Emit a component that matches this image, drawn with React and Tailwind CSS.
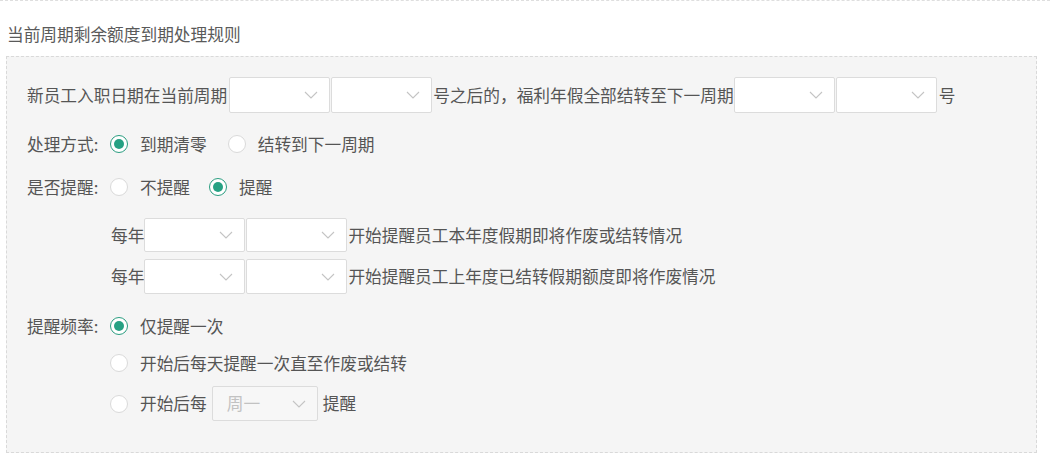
const FONT = { fontFamily: '"Noto Sans CJK SC", "Noto Sans", sans-serif' };

function Chevron({ className = '' }) {
  return (
    <svg width="14" height="8" viewBox="0 0 14 8" className={className} aria-hidden="true">
      <path d="M1 1 L7 7 L13 1" fill="none" stroke="#c4c4c4" strokeWidth="1.1" />
    </svg>
  );
}

function Select({ h = 'h-[36px]', disabled, placeholder }) {
  return (
    <div
      className={`relative ${disabled ? 'w-[106px] bg-[#f7f7f7]' : 'w-[101px] bg-white'} ${h} shrink-0 border border-[#dcdcdc] rounded-[2px] flex items-center`}
    >
      {placeholder && <span className="pl-[14px] text-[#c2c2c2]">{placeholder}</span>}
      <Chevron className="absolute right-[11px] top-1/2 -translate-y-1/2" />
    </div>
  );
}

function Radio({ checked, label }) {
  return (
    <div className="flex items-center">
      <span
        className={`w-[18px] h-[18px] rounded-full border flex items-center justify-center bg-white ${
          checked ? 'border-[#2a9d80]' : 'border-[#dadada]'
        }`}
      >
        {checked && <span className="w-[10px] h-[10px] rounded-full bg-[#26a183]" />}
      </span>
      <span className="ml-[12px]">{label}</span>
    </div>
  );
}

export default function App() {
  return (
    <div className="w-[1050px] h-[465px] bg-white text-[16.7px] text-[#555] leading-none" style={FONT}>
      <div className="border-t border-dashed border-[#dedede] pt-[22px] pl-[7px]">
        <div className="h-[22px] leading-[22px] text-[#5a5a5a]">当前周期剩余额度到期处理规则</div>
      </div>
      <div className="mt-[11px] ml-[6px] w-[1031px] h-[397px] border border-dashed border-[#d9d9d9] bg-[#f5f5f5] pl-[20px]">
        <div className="mt-[20px] h-[36px] flex items-center">
          <span>新员工入职日期在当前周期</span>
          <div className="ml-[2px] flex gap-[1px]">
            <Select />
            <Select />
          </div>
          <span className="ml-[1px]">号之后的，福利年假全部结转至下一周期</span>
          <div className="flex gap-[1px]">
            <Select />
            <Select />
          </div>
          <span className="ml-[2px]">号</span>
        </div>

        <div className="mt-[16px] h-[30px] flex items-center">
          <span className="w-[83px]">处理方式:</span>
          <div className="flex gap-[21px]">
            <Radio checked label="到期清零" />
            <Radio label="结转到下一周期" />
          </div>
        </div>

        <div className="mt-[13px] h-[30px] flex items-center">
          <span className="w-[83px]">是否提醒:</span>
          <div className="flex gap-[19px]">
            <Radio label="不提醒" />
            <Radio checked label="提醒" />
          </div>
        </div>

        <div className="pl-[84px]">
          <div className="mt-[16px] h-[34px] flex items-center">
            <span>每年</span>
            <div className="flex gap-[1px]">
              <Select h="h-[34px]" />
              <Select h="h-[34px]" />
            </div>
            <span className="ml-[1px]">开始提醒员工本年度假期即将作废或结转情况</span>
          </div>
          <div className="mt-[7px] h-[35px] flex items-center">
            <span>每年</span>
            <div className="flex gap-[1px]">
              <Select h="h-[35px]" />
              <Select h="h-[35px]" />
            </div>
            <span className="ml-[1px]">开始提醒员工上年度已结转假期额度即将作废情况</span>
          </div>
        </div>

        <div className="mt-[17px] h-[30px] flex items-center">
          <span className="w-[83px]">提醒频率:</span>
          <Radio checked label="仅提醒一次" />
        </div>
        <div className="mt-[7px] h-[30px] flex items-center pl-[83px]">
          <Radio label="开始后每天提醒一次直至作废或结转" />
        </div>
        <div className="mt-[8px] h-[35px] flex items-center pl-[83px]">
          <Radio label="开始后每" />
          <div className="ml-[5px]">
            <Select h="h-[35px]" disabled placeholder="周一" />
          </div>
          <span className="ml-[5px]">提醒</span>
        </div>
      </div>
    </div>
  );
}
